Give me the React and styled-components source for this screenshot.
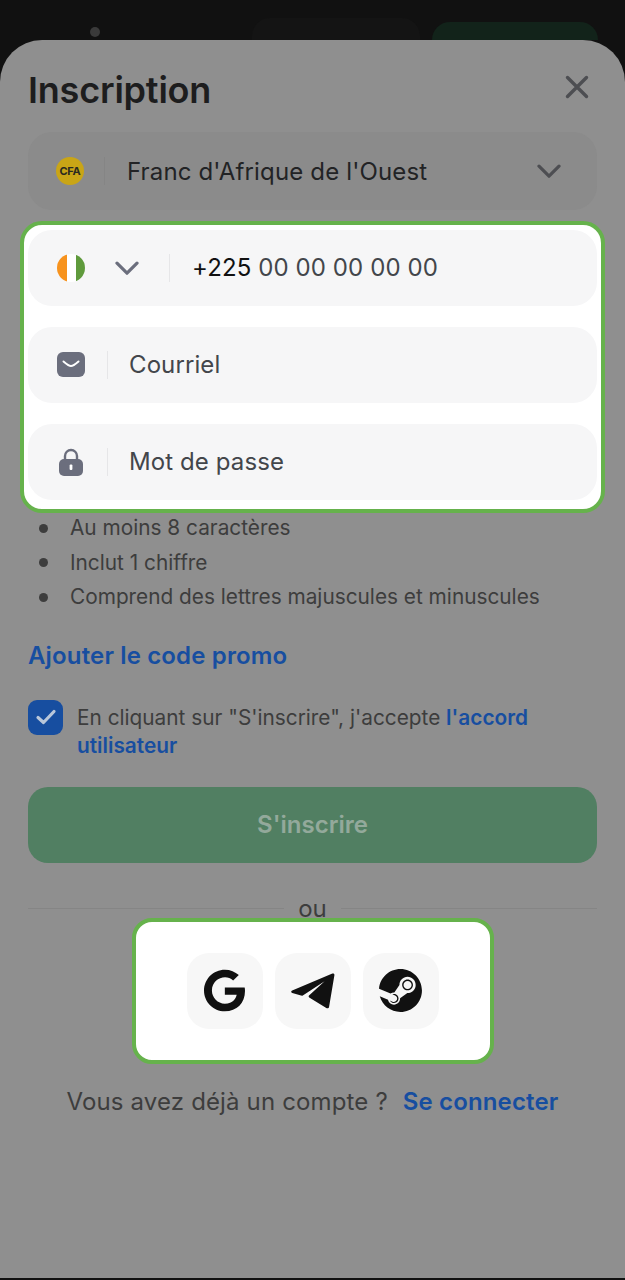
import React from "react";
import styled, { createGlobalStyle } from "styled-components";
import { FaGoogle } from "react-icons/fa";
import { SiSteam } from "react-icons/si";

const Global = createGlobalStyle`
  html, body { margin: 0; padding: 0; background: #111111; }
  * { box-sizing: border-box; }
  body { font-family: Inter, "Liberation Sans", sans-serif; }
`;

const Page = styled.div`
  width: 625px;
  height: 1280px;
  overflow: hidden;
  background: #111111;
`;

const TopBar = styled.header`
  height: 40px;
  overflow: hidden;
  display: flex;
  align-items: flex-start;
  padding: 18px 27px 0 90px;
`;

const Dot = styled.span`
  width: 10px;
  height: 10px;
  margin-top: 9px;
  border-radius: 50%;
  background: #3a3a3a;
`;

const TopPill = styled.span`
  width: ${(p) => p.$w}px;
  height: 60px;
  margin-left: ${(p) => p.$gap}px;
  margin-top: ${(p) => p.$top}px;
  border-radius: 18px;
  background: ${(p) => p.$bg};
`;

const Sheet = styled.main`
  height: 1238px;
  padding: 0 28px;
  border-radius: 42px 42px 0 0;
  background: #8f8f8f;
`;

const TitleRow = styled.div`
  height: 92px;
  display: flex;
  align-items: center;
  justify-content: space-between;
  padding: 8px 8px 0 0;
`;

const Title = styled.h1`
  margin: 0;
  font-size: 36px;
  line-height: 44px;
  font-weight: 600;
  letter-spacing: -0.2px;
  color: #1d1d1e;
`;

const CloseButton = styled.button`
  display: flex;
  padding: 0;
  border: 0;
  background: none;
  margin-top: -6px;
`;

const SelectField = styled.div`
  height: 78px;
  display: flex;
  align-items: center;
  padding: 0 36px 0 28px;
  border-radius: 24px;
  background: #8b8b8b;
`;

const CfaBadge = styled.span`
  width: 28px;
  height: 28px;
  flex: none;
  display: flex;
  align-items: center;
  justify-content: center;
  border-radius: 50%;
  background: #c9a516;
  color: #2a2a20;
  font-size: 11px;
  font-weight: 700;
  letter-spacing: -0.3px;
`;

const Divider = styled.span`
  width: 1px;
  height: 28px;
  flex: none;
  margin: 0 ${(p) => p.$after}px 0 ${(p) => p.$before}px;
  background: ${(p) => (p.$dim ? "#858585" : "#e6e6e8")};
`;

const SelectText = styled.span`
  flex: 1;
  font-size: 24px;
  letter-spacing: 0.15px;
  color: #222325;
`;

const Highlight = styled.section`
  margin: 11px -8px 0;
  padding: 5px 4px 9px;
  background: #ffffff;
  border: 4px solid #66b24c;
  border-radius: 22px;
  display: flex;
  flex-direction: column;
  gap: 21px;
`;

const InputField = styled.div`
  height: 76px;
  display: flex;
  align-items: center;
  padding-left: 29px;
  border-radius: 24px;
  background: #f6f6f7;
`;

const IconSlot = styled.span`
  width: 28px;
  flex: none;
  display: flex;
  justify-content: center;
`;

const ChevronSlot = styled.span`
  display: flex;
  margin-left: 30px;
`;

const Placeholder = styled.span`
  margin-top: -2px;
  font-size: 24px;
  letter-spacing: 0.1px;
  color: #43464b;
`;

const PhoneText = styled(Placeholder)`
  & b {
    font-weight: 400;
    color: #111111;
  }
`;

const Rules = styled.ul`
  margin: -2px 0 0;
  padding: 0;
  list-style: none;
  color: #3d3d3d;
  font-size: 20.8px;
  line-height: 34.5px;
`;

const RuleItem = styled.li`
  display: flex;
  align-items: center;
  gap: 22px;
  padding-left: 11px;
  &::before {
    content: "";
    width: 9px;
    height: 9px;
    border-radius: 50%;
    background: #3d3d3d;
  }
`;

const PromoLink = styled.a`
  display: block;
  margin-top: 25px;
  font-size: 24px;
  line-height: 32px;
  font-weight: 600;
  letter-spacing: 0.15px;
  color: #174ea0;
`;

const TermsRow = styled.label`
  display: flex;
  gap: 14px;
  margin-top: 28px;
`;

const CheckBox = styled.span`
  width: 35px;
  height: 35px;
  flex: none;
  display: flex;
  align-items: center;
  justify-content: center;
  border-radius: 9px;
  background: #174ea0;
`;

const TermsText = styled.p`
  margin: 4px 0 0;
  font-size: 20.8px;
  line-height: 28px;
  color: #3d3d3d;
  & a {
    font-weight: 600;
    color: #174ea0;
  }
`;

const SubmitButton = styled.button`
  display: block;
  width: 100%;
  height: 76px;
  margin-top: 27px;
  border: 0;
  border-radius: 20px;
  background: #517f62;
  color: #93a99b;
  font-family: inherit;
  font-size: 24px;
  font-weight: 600;
`;

const OrRow = styled.div`
  display: flex;
  align-items: center;
  gap: 14px;
  height: 24px;
  margin-top: 34px;
  color: #3d3d3d;
  font-size: 24px;
  &::before,
  &::after {
    content: "";
    flex: 1;
    height: 1px;
    background: #858585;
  }
`;

const SocialGroup = styled.section`
  width: 362px;
  height: 146px;
  margin: -3px auto 0;
  border: 4px solid #66b24c;
  border-radius: 20px;
  background: #ffffff;
  display: flex;
  align-items: center;
  justify-content: center;
  gap: 12px;
`;

const SocialButton = styled.button`
  width: 76px;
  height: 76px;
  padding: 0;
  display: flex;
  align-items: center;
  justify-content: center;
  border: 0;
  border-radius: 22px;
  background: #f7f7f7;
  color: #111111;
`;

const LoginLine = styled.p`
  margin: 22px 0 0;
  text-align: center;
  font-size: 24px;
  line-height: 32px;
  letter-spacing: 0.15px;
  color: #3d3d3d;
  & a {
    margin-left: 8px;
    font-weight: 600;
    color: #174ea0;
  }
`;

const Chevron = ({ color, size = 24 }) => (
  <svg width={size} height={size * 0.6} viewBox="0 0 24 14" fill="none">
    <path d="M2 2l10 10L22 2" stroke={color} strokeWidth="3.2" strokeLinecap="round" strokeLinejoin="round" />
  </svg>
);

const CloseIcon = () => (
  <svg width="24" height="24" viewBox="0 0 24 24" fill="none">
    <path d="M2.5 2.5l19 19M21.5 2.5l-19 19" stroke="#4d4e52" strokeWidth="3.4" strokeLinecap="round" />
  </svg>
);

const FlagIcon = () => (
  <svg width="28" height="28" viewBox="0 0 28 28">
    <defs>
      <clipPath id="flagDisc"><circle cx="14" cy="14" r="14" /></clipPath>
    </defs>
    <g clipPath="url(#flagDisc)">
      <rect width="10" height="28" fill="#f7931e" />
      <rect x="10" width="9" height="28" fill="#ffffff" />
      <rect x="19" width="9" height="28" fill="#5f9a3c" />
    </g>
  </svg>
);

const MailIcon = () => (
  <svg width="28" height="26" viewBox="0 0 28 26">
    <rect width="28" height="25" rx="6" fill="#6b6e7d" />
    <path d="M6.5 9.5c4 3.4 6 4.6 7.5 4.6s3.5-1.2 7.5-4.6" fill="none" stroke="#ffffff" strokeWidth="2" strokeLinecap="round" />
  </svg>
);

const LockIcon = () => (
  <svg width="24" height="28" viewBox="0 0 24 28">
    <path d="M6 12V8a6 6 0 0 1 12 0v4" fill="none" stroke="#6b6e7d" strokeWidth="2.4" />
    <rect y="11" width="24" height="17" rx="5" fill="#6b6e7d" />
    <rect x="10.6" y="16.5" width="2.8" height="5.5" rx="1" fill="#ffffff" />
  </svg>
);

const CheckIcon = () => (
  <svg width="22" height="18" viewBox="0 0 22 18" fill="none">
    <path d="M3 9.5l5.5 5L19 3.5" stroke="#b9c7da" strokeWidth="3.2" strokeLinecap="round" strokeLinejoin="round" />
  </svg>
);

const PlaneIcon = () => (
  <svg width="44" height="36" viewBox="0 0 44 36">
    <path
      d="M1.2 17.6 41.4.6c1.2-.5 2.2.4 2 1.6l-5.3 31.6c-.2 1.4-1.6 2-2.8 1.2L18.2 24.4c-.7-.5-.8-1.4-.2-2L33.6 8.2 11.8 22.4c-.6.4-1.2.4-1.8.2L1.3 20c-1.4-.4-1.5-1.9-.1-2.4z"
      fill="#111111"
    />
  </svg>
);

export default function App() {
  return (
    <Page>
      <Global />
      <TopBar>
        <Dot />
        <TopPill $w={168} $gap={152} $top={0} $bg="#141414" />
        <TopPill $w={166} $gap={12} $top={4} $bg="#12231a" />
      </TopBar>
      <Sheet>
        <TitleRow>
          <Title>Inscription</Title>
          <CloseButton aria-label="Fermer"><CloseIcon /></CloseButton>
        </TitleRow>
        <SelectField>
          <CfaBadge>CFA</CfaBadge>
          <Divider $dim $before={20} $after={22} />
          <SelectText>Franc d'Afrique de l'Ouest</SelectText>
          <Chevron color="#4d4e52" />
        </SelectField>
        <Highlight>
          <InputField>
            <FlagIcon />
            <ChevronSlot><Chevron color="#6b6e7d" /></ChevronSlot>
            <Divider $before={30} $after={22} />
            <PhoneText><b>+225</b> 00 00 00 00 00</PhoneText>
          </InputField>
          <InputField>
            <IconSlot><MailIcon /></IconSlot>
            <Divider $before={22} $after={21} />
            <Placeholder>Courriel</Placeholder>
          </InputField>
          <InputField>
            <IconSlot><LockIcon /></IconSlot>
            <Divider $before={22} $after={21} />
            <Placeholder>Mot de passe</Placeholder>
          </InputField>
        </Highlight>
        <Rules>
          <RuleItem>Au moins 8 caractères</RuleItem>
          <RuleItem>Inclut 1 chiffre</RuleItem>
          <RuleItem>Comprend des lettres majuscules et minuscules</RuleItem>
        </Rules>
        <PromoLink>Ajouter le code promo</PromoLink>
        <TermsRow>
          <CheckBox><CheckIcon /></CheckBox>
          <TermsText>En cliquant sur "S'inscrire", j'accepte <a>l'accord utilisateur</a></TermsText>
        </TermsRow>
        <SubmitButton>S'inscrire</SubmitButton>
        <OrRow>ou</OrRow>
        <SocialGroup>
          <SocialButton aria-label="Google"><FaGoogle size={43} /></SocialButton>
          <SocialButton aria-label="Telegram"><PlaneIcon /></SocialButton>
          <SocialButton aria-label="Steam"><SiSteam size={43} /></SocialButton>
        </SocialGroup>
        <LoginLine>Vous avez déjà un compte ? <a>Se connecter</a></LoginLine>
      </Sheet>
    </Page>
  );
}
